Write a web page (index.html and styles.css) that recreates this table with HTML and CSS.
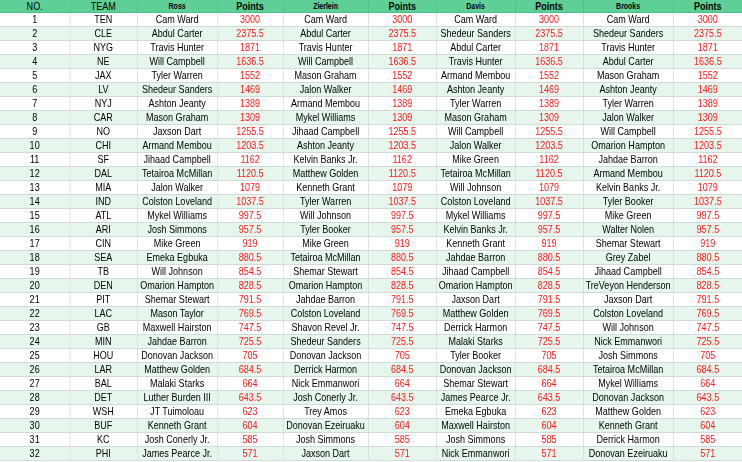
FILE: index.html
```html
<!DOCTYPE html>
<html>
<head>
<meta charset="utf-8">
<link rel="stylesheet" href="styles.css">
</head>
<body>
<div class="frame">
<table class="board">
<colgroup>
<col class="c-no"><col class="c-team"><col class="c-ross"><col class="c-p1"><col class="c-zier"><col class="c-p2"><col class="c-davis"><col class="c-p3"><col class="c-brooks"><col class="c-p4">
</colgroup>
<thead>
<tr><th class="h-big">NO.</th><th class="h-big">TEAM</th><th class="h-name">Ross</th><th class="h-pts">Points</th><th class="h-name">Zierlein</th><th class="h-pts">Points</th><th class="h-name">Davis</th><th class="h-pts">Points</th><th class="h-name">Brooks</th><th class="h-pts">Points</th></tr>
</thead>
<tbody>
<tr><td>1</td><td>TEN</td><td>Cam Ward</td><td class="pts">3000</td><td>Cam Ward</td><td class="pts">3000</td><td>Cam Ward</td><td class="pts">3000</td><td>Cam Ward</td><td class="pts">3000</td></tr>
<tr><td>2</td><td>CLE</td><td>Abdul Carter</td><td class="pts">2375.5</td><td>Abdul Carter</td><td class="pts">2375.5</td><td>Shedeur Sanders</td><td class="pts">2375.5</td><td>Shedeur Sanders</td><td class="pts">2375.5</td></tr>
<tr><td>3</td><td>NYG</td><td>Travis Hunter</td><td class="pts">1871</td><td>Travis Hunter</td><td class="pts">1871</td><td>Abdul Carter</td><td class="pts">1871</td><td>Travis Hunter</td><td class="pts">1871</td></tr>
<tr><td>4</td><td>NE</td><td>Will Campbell</td><td class="pts">1636.5</td><td>Will Campbell</td><td class="pts">1636.5</td><td>Travis Hunter</td><td class="pts">1636.5</td><td>Abdul Carter</td><td class="pts">1636.5</td></tr>
<tr><td>5</td><td>JAX</td><td>Tyler Warren</td><td class="pts">1552</td><td>Mason Graham</td><td class="pts">1552</td><td>Armand Membou</td><td class="pts">1552</td><td>Mason Graham</td><td class="pts">1552</td></tr>
<tr><td>6</td><td>LV</td><td>Shedeur Sanders</td><td class="pts">1469</td><td>Jalon Walker</td><td class="pts">1469</td><td>Ashton Jeanty</td><td class="pts">1469</td><td>Ashton Jeanty</td><td class="pts">1469</td></tr>
<tr><td>7</td><td>NYJ</td><td>Ashton Jeanty</td><td class="pts">1389</td><td>Armand Membou</td><td class="pts">1389</td><td>Tyler Warren</td><td class="pts">1389</td><td>Tyler Warren</td><td class="pts">1389</td></tr>
<tr><td>8</td><td>CAR</td><td>Mason Graham</td><td class="pts">1309</td><td>Mykel Williams</td><td class="pts">1309</td><td>Mason Graham</td><td class="pts">1309</td><td>Jalon Walker</td><td class="pts">1309</td></tr>
<tr><td>9</td><td>NO</td><td>Jaxson Dart</td><td class="pts">1255.5</td><td>Jihaad Campbell</td><td class="pts">1255.5</td><td>Will Campbell</td><td class="pts">1255.5</td><td>Will Campbell</td><td class="pts">1255.5</td></tr>
<tr><td>10</td><td>CHI</td><td>Armand Membou</td><td class="pts">1203.5</td><td>Ashton Jeanty</td><td class="pts">1203.5</td><td>Jalon Walker</td><td class="pts">1203.5</td><td>Omarion Hampton</td><td class="pts">1203.5</td></tr>
<tr><td>11</td><td>SF</td><td>Jihaad Campbell</td><td class="pts">1162</td><td>Kelvin Banks Jr.</td><td class="pts">1162</td><td>Mike Green</td><td class="pts">1162</td><td>Jahdae Barron</td><td class="pts">1162</td></tr>
<tr><td>12</td><td>DAL</td><td>Tetairoa McMillan</td><td class="pts">1120.5</td><td>Matthew Golden</td><td class="pts">1120.5</td><td>Tetairoa McMillan</td><td class="pts">1120.5</td><td>Armand Membou</td><td class="pts">1120.5</td></tr>
<tr><td>13</td><td>MIA</td><td>Jalon Walker</td><td class="pts">1079</td><td>Kenneth Grant</td><td class="pts">1079</td><td>Will Johnson</td><td class="pts">1079</td><td>Kelvin Banks Jr.</td><td class="pts">1079</td></tr>
<tr><td>14</td><td>IND</td><td>Colston Loveland</td><td class="pts">1037.5</td><td>Tyler Warren</td><td class="pts">1037.5</td><td>Colston Loveland</td><td class="pts">1037.5</td><td>Tyler Booker</td><td class="pts">1037.5</td></tr>
<tr><td>15</td><td>ATL</td><td>Mykel Williams</td><td class="pts">997.5</td><td>Will Johnson</td><td class="pts">997.5</td><td>Mykel Williams</td><td class="pts">997.5</td><td>Mike Green</td><td class="pts">997.5</td></tr>
<tr><td>16</td><td>ARI</td><td>Josh Simmons</td><td class="pts">957.5</td><td>Tyler Booker</td><td class="pts">957.5</td><td>Kelvin Banks Jr.</td><td class="pts">957.5</td><td>Walter Nolen</td><td class="pts">957.5</td></tr>
<tr><td>17</td><td>CIN</td><td>Mike Green</td><td class="pts">919</td><td>Mike Green</td><td class="pts">919</td><td>Kenneth Grant</td><td class="pts">919</td><td>Shemar Stewart</td><td class="pts">919</td></tr>
<tr><td>18</td><td>SEA</td><td>Emeka Egbuka</td><td class="pts">880.5</td><td>Tetairoa McMillan</td><td class="pts">880.5</td><td>Jahdae Barron</td><td class="pts">880.5</td><td>Grey Zabel</td><td class="pts">880.5</td></tr>
<tr><td>19</td><td>TB</td><td>Will Johnson</td><td class="pts">854.5</td><td>Shemar Stewart</td><td class="pts">854.5</td><td>Jihaad Campbell</td><td class="pts">854.5</td><td>Jihaad Campbell</td><td class="pts">854.5</td></tr>
<tr><td>20</td><td>DEN</td><td>Omarion Hampton</td><td class="pts">828.5</td><td>Omarion Hampton</td><td class="pts">828.5</td><td>Omarion Hampton</td><td class="pts">828.5</td><td>TreVeyon Henderson</td><td class="pts">828.5</td></tr>
<tr><td>21</td><td>PIT</td><td>Shemar Stewart</td><td class="pts">791.5</td><td>Jahdae Barron</td><td class="pts">791.5</td><td>Jaxson Dart</td><td class="pts">791.5</td><td>Jaxson Dart</td><td class="pts">791.5</td></tr>
<tr><td>22</td><td>LAC</td><td>Mason Taylor</td><td class="pts">769.5</td><td>Colston Loveland</td><td class="pts">769.5</td><td>Matthew Golden</td><td class="pts">769.5</td><td>Colston Loveland</td><td class="pts">769.5</td></tr>
<tr><td>23</td><td>GB</td><td>Maxwell Hairston</td><td class="pts">747.5</td><td>Shavon Revel Jr.</td><td class="pts">747.5</td><td>Derrick Harmon</td><td class="pts">747.5</td><td>Will Johnson</td><td class="pts">747.5</td></tr>
<tr><td>24</td><td>MIN</td><td>Jahdae Barron</td><td class="pts">725.5</td><td>Shedeur Sanders</td><td class="pts">725.5</td><td>Malaki Starks</td><td class="pts">725.5</td><td>Nick Emmanwori</td><td class="pts">725.5</td></tr>
<tr><td>25</td><td>HOU</td><td>Donovan Jackson</td><td class="pts">705</td><td>Donovan Jackson</td><td class="pts">705</td><td>Tyler Booker</td><td class="pts">705</td><td>Josh Simmons</td><td class="pts">705</td></tr>
<tr><td>26</td><td>LAR</td><td>Matthew Golden</td><td class="pts">684.5</td><td>Derrick Harmon</td><td class="pts">684.5</td><td>Donovan Jackson</td><td class="pts">684.5</td><td>Tetairoa McMillan</td><td class="pts">684.5</td></tr>
<tr><td>27</td><td>BAL</td><td>Malaki Starks</td><td class="pts">664</td><td>Nick Emmanwori</td><td class="pts">664</td><td>Shemar Stewart</td><td class="pts">664</td><td>Mykel Williams</td><td class="pts">664</td></tr>
<tr><td>28</td><td>DET</td><td>Luther Burden III</td><td class="pts">643.5</td><td>Josh Conerly Jr.</td><td class="pts">643.5</td><td>James Pearce Jr.</td><td class="pts">643.5</td><td>Donovan Jackson</td><td class="pts">643.5</td></tr>
<tr><td>29</td><td>WSH</td><td>JT Tuimoloau</td><td class="pts">623</td><td>Trey Amos</td><td class="pts">623</td><td>Emeka Egbuka</td><td class="pts">623</td><td>Matthew Golden</td><td class="pts">623</td></tr>
<tr><td>30</td><td>BUF</td><td>Kenneth Grant</td><td class="pts">604</td><td>Donovan Ezeiruaku</td><td class="pts">604</td><td>Maxwell Hairston</td><td class="pts">604</td><td>Kenneth Grant</td><td class="pts">604</td></tr>
<tr><td>31</td><td>KC</td><td>Josh Conerly Jr.</td><td class="pts">585</td><td>Josh Simmons</td><td class="pts">585</td><td>Josh Simmons</td><td class="pts">585</td><td>Derrick Harmon</td><td class="pts">585</td></tr>
<tr><td>32</td><td>PHI</td><td>James Pearce Jr.</td><td class="pts">571</td><td>Jaxson Dart</td><td class="pts">571</td><td>Nick Emmanwori</td><td class="pts">571</td><td>Donovan Ezeiruaku</td><td class="pts">571</td></tr>
</tbody>
</table>
</div>
</body>
</html>
```

FILE: styles.css
```css
html, body {
  margin: 0;
  padding: 0;
  background: #ffffff;
  overflow: hidden;
}
.frame {
  width: 742px;
  height: 462px;
  overflow: hidden;
}
.board {
  width: 905px;
  table-layout: fixed;
  border-collapse: collapse;
  font-family: "Liberation Sans", Arial, sans-serif;
  font-size: 11px;
  color: #000;
  transform: scaleX(0.82);
  transform-origin: 0 0;
}
.c-no { width: 85px; }
.c-team { width: 82px; }
.c-ross { width: 98px; }
.c-p1 { width: 80px; }
.c-zier { width: 104px; }
.c-p2 { width: 83px; }
.c-davis { width: 96px; }
.c-p3 { width: 83px; }
.c-brooks { width: 110px; }
.c-p4 { width: 84px; }
.board th {
  background: #5dcf97;
  height: 12px;
  padding: 0;
  line-height: 12px;
  border: 1px solid #4fbf88;
  border-top: none;
  text-align: center;
  white-space: nowrap;
  color: #000;
}
.board th:first-child { border-left: none; }
.board th:last-child { border-right: none; }
.h-big { font-weight: normal; font-size: 11px; }
.h-pts { font-weight: bold; font-size: 11px; }
.h-name { font-weight: bold; font-size: 8.5px; }
.board td {
  height: 13px;
  padding: 0;
  line-height: 13px;
  border: 1px solid #d2dbd5;
  text-align: center;
  white-space: nowrap;
  overflow: hidden;
}
.board td:first-child { border-left: none; }
.board td:last-child { border-right: none; }
.board tbody tr:nth-child(even) td { background: #e6f6ec; }
.board td.pts { color: #ff1a1a; }
```
